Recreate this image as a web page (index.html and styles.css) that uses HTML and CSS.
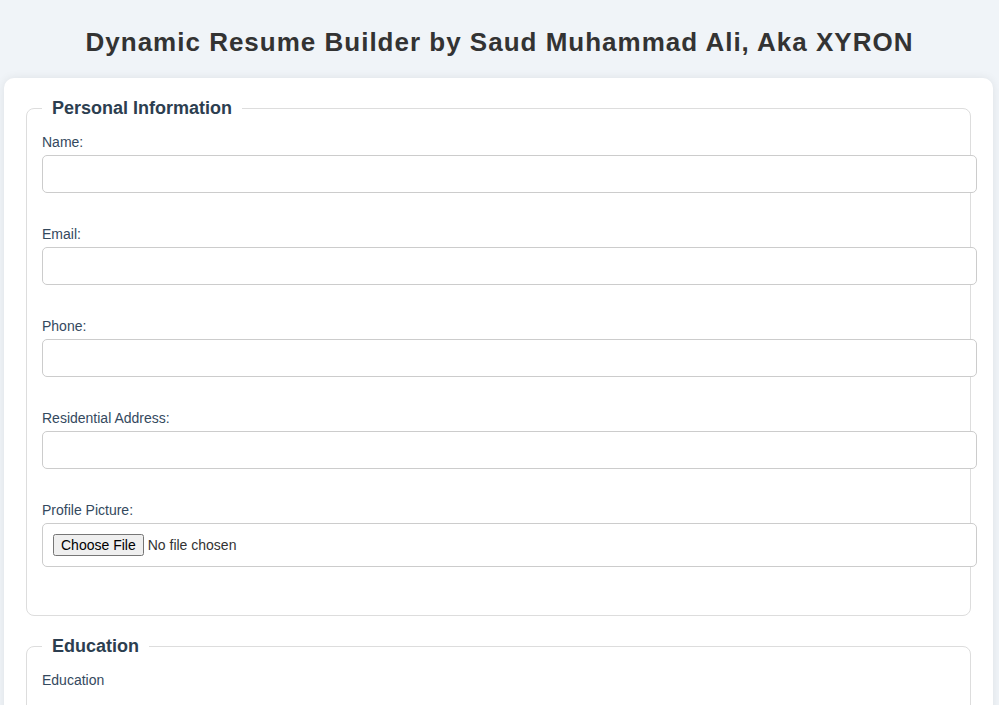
FILE: index.html
```html
<!DOCTYPE html>
<html lang="en">
<head>
<meta charset="utf-8">
<title>Dynamic Resume Builder</title>
<link rel="stylesheet" href="styles.css">
</head>
<body>
<header class="page-header">
  <h1 class="title">Dynamic Resume Builder by Saud Muhammad Ali, Aka XYRON</h1>
</header>
<main class="container">
  <form class="resume-form">
    <fieldset class="section">
      <legend class="section-title">Personal Information</legend>
      <div class="form-group">
        <label class="field-label" for="name">Name:</label>
        <input class="field-input" type="text" id="name">
      </div>
      <div class="form-group">
        <label class="field-label" for="email">Email:</label>
        <input class="field-input" type="email" id="email">
      </div>
      <div class="form-group">
        <label class="field-label" for="phone">Phone:</label>
        <input class="field-input" type="tel" id="phone">
      </div>
      <div class="form-group">
        <label class="field-label" for="address">Residential Address:</label>
        <input class="field-input" type="text" id="address">
      </div>
      <div class="form-group">
        <label class="field-label" for="picture">Profile Picture:</label>
        <input class="field-input" type="file" id="picture">
      </div>
    </fieldset>
    <fieldset class="section">
      <legend class="section-title">Education</legend>
      <div class="form-group">
        <label class="field-label" for="education">Education</label>
        <textarea class="field-input field-textarea" id="education" rows="4"></textarea>
      </div>
    </fieldset>
  </form>
</main>
</body>
</html>
```

FILE: styles.css
```css
html, body {
  margin: 0;
  padding: 0;
}

body {
  background: #f0f4f8;
  font-family: "Liberation Sans", Arial, sans-serif;
  color: #333;
}

.page-header {
  padding: 27px 0 21px;
}

.title {
  margin: 0;
  text-align: center;
  font-size: 26px;
  font-weight: bold;
  letter-spacing: 1px;
  color: #333;
  line-height: 30px;
}

.container {
  width: 989px;
  margin: 0 0 0 4px;
  box-sizing: border-box;
  background: #fff;
  border-radius: 10px;
  padding: 20px;
  box-shadow: 0 0 10px rgba(0, 0, 0, 0.08);
}

.resume-form {
  margin: 0;
}

.section {
  margin: 0 2px 20px;
  padding: 15px;
  border: 1px solid #ddd;
  border-radius: 8px;
}

.section-title {
  padding: 0 10px;
  font-size: 18px;
  font-weight: bold;
  color: #2c3e50;
}

.form-group {
  margin-bottom: 33px;
}

.field-label {
  display: block;
  margin-bottom: 5px;
  font-size: 14px;
  line-height: 16px;
  color: #34495e;
}

.field-input {
  display: block;
  width: 100%;
  padding: 10px;
  margin: 0;
  border: 1px solid #ccc;
  border-radius: 5px;
  font-size: 14px;
  font-family: "Liberation Sans", Arial, sans-serif;
  background: #fff;
}

.field-textarea {
  margin-top: 20px;
  resize: vertical;
}
```
